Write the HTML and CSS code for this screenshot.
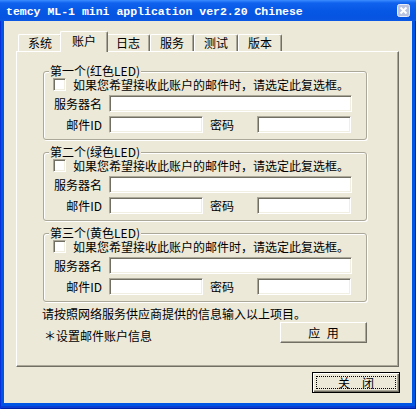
FILE: index.html
```html
<!DOCTYPE html>
<html lang="zh-CN">
  <head>
    <meta charset="UTF-8" />
    <meta name="viewport" content="width=device-width, initial-scale=1.0" />
    <title>temcy ML-1 mini application</title>
    <link rel="stylesheet" href="styles.css">
  </head>
  <body>
    <div class="window">
      <div class="titlebar">
        <span class="title">temcy ML-1 mini application ver2.20 Chinese</span>
        <span class="title-close">
          <svg width="13" height="13" viewBox="0 0 13 13" xmlns="http://www.w3.org/2000/svg">
            <rect x="0.5" y="0.5" width="12" height="12" rx="2" fill="#b9c3df" stroke="#e9edf7" />
            <path d="M3.5 3.5 L9.5 9.5 M9.5 3.5 L3.5 9.5" stroke="#ffffff" stroke-width="2" />
          </svg>
        </span>
      </div>

      <div class="client">
        <div class="tabs">
          <div class="tab">系统</div>
          <div class="tab active">账户</div>
          <div class="tab">日志</div>
          <div class="tab">服务</div>
          <div class="tab">测试</div>
          <div class="tab">版本</div>
        </div>

        <div class="panel">
          <fieldset class="group">
            <legend>第一个(红色LED)</legend>
            <label class="check-row">
              <input type="checkbox" class="check" />
              <span class="check-text">如果您希望接收此账户的邮件时，请选定此复选框。</span>
            </label>
            <div class="field-row">
              <span class="field-label">服务器名</span>
              <input class="text-input wide" />
            </div>
            <div class="field-row">
              <span class="field-label">邮件ID</span>
              <input class="text-input short" />
              <span class="pw-label">密码</span>
              <input class="text-input short" type="password" />
            </div>
          </fieldset>

          <fieldset class="group">
            <legend>第二个(绿色LED)</legend>
            <label class="check-row">
              <input type="checkbox" class="check" />
              <span class="check-text">如果您希望接收此账户的邮件时，请选定此复选框。</span>
            </label>
            <div class="field-row">
              <span class="field-label">服务器名</span>
              <input class="text-input wide" />
            </div>
            <div class="field-row">
              <span class="field-label">邮件ID</span>
              <input class="text-input short" />
              <span class="pw-label">密码</span>
              <input class="text-input short" type="password" />
            </div>
          </fieldset>

          <fieldset class="group">
            <legend>第三个(黄色LED)</legend>
            <label class="check-row">
              <input type="checkbox" class="check" />
              <span class="check-text">如果您希望接收此账户的邮件时，请选定此复选框。</span>
            </label>
            <div class="field-row">
              <span class="field-label">服务器名</span>
              <input class="text-input wide" />
            </div>
            <div class="field-row">
              <span class="field-label">邮件ID</span>
              <input class="text-input short" />
              <span class="pw-label">密码</span>
              <input class="text-input short" type="password" />
            </div>
          </fieldset>

          <p class="hint">请按照网络服务供应商提供的信息输入以上项目。</p>
          <div class="apply-row">
            <span class="note">＊设置邮件账户信息</span>
            <button class="btn apply-btn">应 用</button>
          </div>
        </div>

        <div class="footer">
          <button class="btn default-btn">关　闭</button>
        </div>
      </div>
    </div>
  </body>
</html>
```

FILE: styles.css
```css
/* Reset CSS */
* {
  margin: 0;
  padding: 0;
  box-sizing: border-box;
}

body {
  font-family: "Noto Sans CJK SC", "Liberation Sans", sans-serif;
  font-size: 12px;
  color: #000;
  background: #fff;
}

.window {
  width: 416px;
  height: 409px;
  display: flex;
  flex-direction: column;
  background: #0055e5;
  box-shadow: inset 1px 0 0 #0831d9, inset -1px 0 0 #0025b0,
    inset 0 -1px 0 #0020a8, inset 0 -3px 0 #0a3ed2;
  overflow: hidden;
}

/* Title bar */
.titlebar {
  height: 21px;
  display: flex;
  align-items: center;
  padding: 2px 6px 0 6px;
  background: linear-gradient(
    to bottom,
    #3d8cff 0px,
    #0f62ee 3px,
    #0758e6 10px,
    #0654e0 18px,
    #0a58e4 21px
  );
}

.title {
  font-family: "Liberation Mono", monospace;
  font-size: 11.5px;
  font-weight: bold;
  color: #fff;
  white-space: nowrap;
  line-height: 14px;
}

.title-close {
  margin-left: auto;
  display: flex;
  margin-top: -2px;
}

/* Client area */
.client {
  height: 382px;
  margin: 0 4px 6px 4px;
  padding: 10px 13px 10px 12px;
  background: #ece9d8;
}

.tabs {
  display: flex;
  align-items: flex-end;
  height: 20px;
  padding-left: 2px;
}

.tab {
  width: 44px;
  height: 17px;
  line-height: 15px;
  text-align: center;
  background: #ece9d8;
  border-top: 1px solid #fff;
  border-left: 1px solid #fff;
  border-right: 1px solid #716f64;
  box-shadow: inset -1px 0 0 #aca899;
  border-radius: 2px 2px 0 0;
}

.tab.active {
  position: relative;
  z-index: 1;
  width: 48px;
  height: 21px;
  margin: 0 -2px -1px -2px;
  line-height: 17px;
}

.panel {
  height: 316px;
  padding: 12px 0 0 26px;
  border-top: 1px solid #fff;
  border-left: 1px solid #fff;
  border-right: 1px solid #716f64;
  border-bottom: 1px solid #716f64;
  box-shadow: inset -1px -1px 0 #aca899;
}

/* Group boxes */
.group {
  width: 324px;
  min-width: 0;
  margin-bottom: 5px;
  padding: 0 13px 6px 8px;
  border: 1px solid #aca899;
  border-radius: 3px;
  box-shadow: inset 1px 1px 0 #fff, 1px 1px 0 #fff;
}

.group legend {
  line-height: 14px;
  height: 14px;
  margin-left: -3px;
  padding: 0 1px;
  background: #ece9d8;
}

.check-row {
  display: flex;
  align-items: center;
  gap: 7px;
  height: 13px;
  white-space: nowrap;
}

.check-text {
  display: block;
  height: 13px;
  line-height: 13px;
}

.check {
  appearance: none;
  width: 13px;
  height: 13px;
  margin-left: 1px;
  flex-shrink: 0;
  background: #fff;
  border: 1px solid;
  border-color: #aca899 #fff #fff #aca899;
  box-shadow: inset 1px 1px 0 #716f64, inset -1px -1px 0 #f1efe2;
}

.field-row {
  display: flex;
  align-items: center;
  height: 17px;
  margin-top: 4px;
}

.field-label {
  width: 50px;
  margin-right: 7px;
  text-align: right;
  white-space: nowrap;
}

.pw-label {
  width: 24px;
  margin: 0 23px 0 7px;
  white-space: nowrap;
}

.text-input {
  height: 17px;
  font: inherit;
  background: #fff;
  border: 1px solid;
  border-color: #aca899 #fff #fff #aca899;
  box-shadow: inset 1px 1px 0 #716f64, inset -1px -1px 0 #f1efe2;
  outline: none;
}

.text-input.wide {
  width: 243px;
}

.text-input.short {
  width: 94px;
}

.hint {
  margin: 4px 0 0 -1px;
  line-height: 14px;
  white-space: nowrap;
}

.apply-row {
  width: 324px;
  margin-top: 1px;
  display: flex;
  justify-content: space-between;
  align-items: flex-end;
}

.note {
  line-height: 14px;
  margin-left: 1px;
}

/* Buttons */
.btn {
  height: 21px;
  font: inherit;
  color: #000;
  background: #ece9d8;
  border: 1px solid;
  border-color: #fff #716f64 #716f64 #fff;
  box-shadow: inset -1px -1px 0 #aca899;
  cursor: pointer;
}

.apply-btn {
  width: 87px;
  word-spacing: 4px;
}

.footer {
  display: flex;
  justify-content: flex-end;
  margin: 5px -1px 0 0;
}

.default-btn {
  width: 88px;
  border: 1px solid #000;
  box-shadow: inset 1px 1px 0 #fff, inset -1px -1px 0 #716f64,
    inset -2px -2px 0 #aca899;
  outline: 1px dotted #000;
  outline-offset: -5px;
}
```
